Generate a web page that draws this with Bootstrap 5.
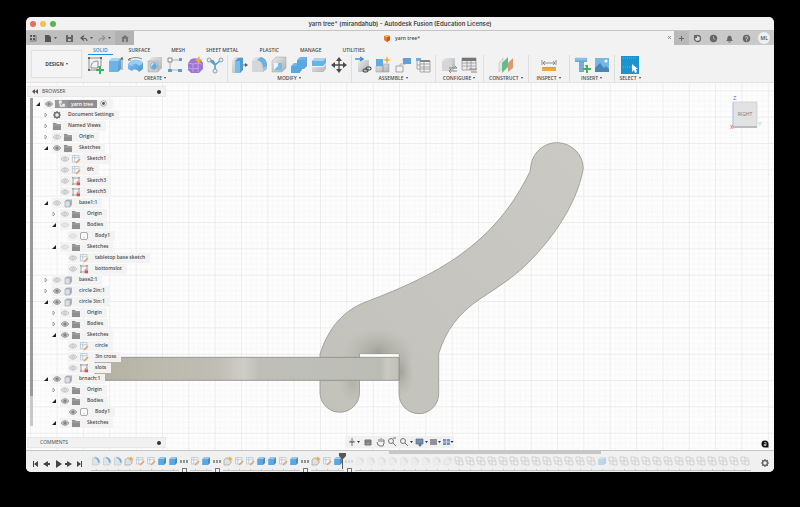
<!DOCTYPE html>
<html lang="en">
<head>
<meta charset="utf-8">
<meta name="viewport" content="width=device-width, initial-scale=1">
<title>yarn tree* - Autodesk Fusion</title>
<link href="https://cdn.jsdelivr.net/npm/bootstrap@5.3.0/dist/css/bootstrap.min.css" rel="stylesheet">
<style>
body{background:#000;font-family:"Open Sans","Noto Sans",sans-serif;font-size:5px;line-height:7px;font-weight:600;color:#4a4a4a;padding:17px 26px 35px}
.app-window{background:#f2f2f2;border-radius:5px}
.title-strip{height:14px;font:600 6px/13px Inter,sans-serif;color:#444;border-bottom:1px solid #c4c4c4}
.lights{left:4px;top:4px}
.light{width:6px;height:6px;border-radius:50%}
button{background:none;border:0;padding:0;color:inherit;font:inherit}
a{color:inherit;text-decoration:none}
svg{display:block;flex:none}
.tab-strip{height:14px;background:#c9c9c9}
.quick{width:89px;background:#bebebe}
.home-tab{width:19px;background:#b2b2b2}
.doc-tab{background:#f2f2f2;padding-right:5px}
.doc-close{right:2px;top:4px}
.plus-tab{width:15px;background:#b9b9b9}
.tab-tools{width:85px}
.avatar{width:12px;height:12px;border-radius:50%;background:#efefef;line-height:12px}
.ribbon{height:38px;border-bottom:1px solid #e2e2e2}
.design{width:51px;height:28px;margin:5px 2px 0 5px;border:1px solid #e2e2e2;border-radius:1px;background:#f4f4f4;box-shadow:0 0 1px #ccc;font-weight:700}
.mode-tabs{height:10px;gap:21px;padding-left:9px}
.mode-tabs a{line-height:10px;height:10px;border-bottom:1px solid transparent}
.mode-tabs a.active{color:#1593d6;margin:0 -5px;padding:0 5px;border-color:#1593d6}
.tools{height:28px}
.tools svg{opacity:.88}
.tool-group{border-right:1px solid #dedede;padding:0 2px 0 1px;height:27px}
.tool-group:last-child{border:0}
.tool-group .cap{line-height:6px}
.g-wide{padding:0 4px 0 3px}
.g-one{padding:0 5px}
.g-mid{padding:0 8px}
.g-tight{padding:0 2px}
.g-last{padding:0 5px}
.caret::after{content:"";display:inline-block;border:1px solid transparent;border-top:2px solid #444;border-bottom:0;margin-left:2px;vertical-align:1px}
.viewport{background:#fdfdfd;min-height:0}
.panel-bar{width:139px;height:11px;background:#f1f1f1;border:1px solid #e8e8e8;font-weight:400;padding:0 4px}
.dot{width:4px;height:4px;border-radius:50%;background:#333}
.side{padding:3px 0 2px 1px}
.tree-scroll{width:3px;margin:1px 2px 0 3px;background:#c8c8c8;height:328px}
.tree-thumb{height:91%;background:#999}
.tree{padding-top:1px}
.tree li{height:11px;line-height:11px}
.arrow{width:9px}
.cell{height:10px;background:rgba(243,243,243,.97);padding-right:5px}
.cell svg{margin-right:1px;opacity:.9}
.cell .lbl{padding-left:5px}
.l0{padding-left:0}.l1{padding-left:8px}.l2{padding-left:16px}.l3{padding-left:24px}
.root .lbl{background:#8f8f8f;color:#fff;height:8px;line-height:8px;padding:0 4px 0 3px;margin-right:3px}
.root .mid{background:#8f8f8f;height:8px;width:13px;margin:0}
.nav-tools{left:50%;bottom:2px;margin-left:-55px;width:109px;height:12px;background:#f1f1f1;padding:0 2px}
.badge-a{right:5px;bottom:2px}
.timeline{height:22px;background:#f0f0f0;border-top:1px solid #c6c6c6}
.h-scroll{margin-left:48.5%;width:28.4%;height:3px;background:#c6c6c6}
.player{width:65px;padding:3px 0 0 2px}
.feat{width:11px;height:17px;padding-top:2px}
.feat>svg{opacity:.88}
.feat::after{content:"";position:absolute;left:0;right:0;bottom:0;height:2px;border-bottom:1px solid #c5c5c5;background:linear-gradient(#c5c5c5,#c5c5c5) 5px 0/1px 2px no-repeat}
.feat.group::after{left:3px;right:auto;width:5px;height:5px;bottom:-2px;border:1px solid #777;background:#f0f0f0}
.dim>svg{opacity:.22;filter:grayscale(.8)}
.dim.tinted>svg{opacity:.3;filter:none}
.head{right:-2px;top:-2px;z-index:2}
</style>
<script src="https://cdn.jsdelivr.net/npm/bootstrap@5.3.0/dist/js/bootstrap.bundle.min.js"></script>
</head>
<body class="vh-100 overflow-hidden">
<svg width="0" height="0" class="position-absolute" aria-hidden="true">
<defs>
<linearGradient id="blue" x2="1" y2="1"><stop stop-color="#7dc1ee"/><stop offset="1" stop-color="#3389cc"/></linearGradient>
<linearGradient id="gry" x2="1" y2="1"><stop stop-color="#e6e8ea"/><stop offset="1" stop-color="#a5a9ad"/></linearGradient>
<symbol id="t-sketch" viewBox="0 0 20 20"><path d="M4 3v12h9M4 3h12v8M6 13C6 9 7 6 13 6v7z" fill="none" stroke="#666" stroke-width=".8"/><path d="M3 2h2v2H3zM15 2h2v2h-2zM3 14h2v2H3z" fill="#555"/><path d="M13 11h3v3h3v2h-3v3h-2v-3h-3v-2h3z" fill="#2fa84c"/></symbol>
<symbol id="t-extrude" viewBox="0 0 20 20"><path d="M4 6l3-3h9v11l-3 3H4z" fill="url(#blue)"/><path d="M4 6h9v11H4z" fill="#5aacE4"/><path d="M4 6l3-3h9l-3 3z" fill="#9bd0f3"/><path d="M17 15V3m-1 2l1-3 1 3" fill="none" stroke="#444" stroke-width=".7"/></symbol>
<symbol id="t-revolve" viewBox="0 0 20 20"><path d="M3 9c3-5 11-6 15-1v6l-4 3c-2-3-5-3-7-1l-4-2z" fill="url(#blue)"/><path d="M3 9c3-5 11-6 15-1l-4 3c-2-3-5-3-7 0z" fill="#8fc9f0"/><path d="M3 5c4-3 10-3 14-1M3 5l2-2M3 5h3" fill="none" stroke="#555" stroke-width=".8"/></symbol>
<symbol id="t-hole" viewBox="0 0 20 20"><path d="M3 6l4-4h10v11l-4 4H3z" fill="url(#gry)"/><path d="M3 6h10v11H3z" fill="#c8cacc" stroke="#999" stroke-width=".5"/><circle cx="9" cy="11" r="3.5" fill="#e7f5ff" stroke="#689" stroke-width=".7"/><path d="M9 8a3 3 0 1 1-3 4z" fill="#4fa4dd"/></symbol>
<symbol id="t-pattern" viewBox="0 0 20 20"><path d="M5 5h11M5 5v10h10" fill="none" stroke="#999" stroke-width=".8"/><path d="M3 3h4v4H3z" fill="#f5f5f5" stroke="#666" stroke-width=".8"/><path d="M14 3h3v3h-3zM3 14h4v3H3zM13 14h4v3h-4z" fill="#3d97d5"/></symbol>
<symbol id="t-form" viewBox="0 0 20 20"><path d="M3 8l3-4q5-2 10 1l2 3v6l-4 4H6l-3-3z" fill="#9367cf"/><path d="M3 8l5 1 5-1 4 1M8 9v8M3 13l5 1 6-1M13 8v9" fill="none" stroke="#bfa3e8" stroke-width=".8"/><path d="M14 1l1 3 3 1-3 1-1 3-2-3-2-1 2-1z" fill="#f5a51d"/></symbol>
<symbol id="t-branch" viewBox="0 0 20 20"><path d="M4 5l6 5 6-5M10 10v6M4 5l4 1 2 3" fill="none" stroke="#3e94cf" stroke-width="1.6"/><g fill="#dfeefa" stroke="#68808f" stroke-width=".8"><circle cx="4" cy="5" r="2"/><circle cx="16" cy="5" r="2"/><circle cx="10" cy="16" r="2"/></g></symbol>
<symbol id="t-press" viewBox="0 0 20 20"><path d="M3 6l3-4h8v12l-3 4H3z" fill="url(#gry)"/><path d="M6 6l3-3h5v12l-3 3H6z" fill="#3b90d0"/><path d="M6 6h5v12H6z" fill="#6ab5e8"/><path d="M14 10h3" stroke="#444" stroke-width=".9"/><path d="M16 8l3 2-3 2z" fill="#444"/></symbol>
<symbol id="t-fillet" viewBox="0 0 20 20"><path d="M3 5l3-3h6c4 1 6 4 6 9v3l-4 3H3z" fill="url(#gry)"/><path d="M3 6h4c5 0 7 4 7 11H3z" fill="#d1d3d5"/><path d="M8 5l4-3c4 1 6 4 6 9l-4 2c0-5-2-7-6-8z" fill="#54a9e2"/></symbol>
<symbol id="t-shell" viewBox="0 0 20 20"><path d="M3 6l4-4h10v11l-4 4H3z" fill="url(#gry)" stroke="#999" stroke-width=".5"/><path d="M5 8h8v7H5z" fill="#eef5fa"/><path d="M5 15l4-4h4v4zM9 8h4v3H9z" fill="#6ab5e8"/></symbol>
<symbol id="t-combine" viewBox="0 0 20 20"><path d="M8 5l3-3h7v9l-3 3h-2v1l-3 3H2v-7l3-3h3z" fill="url(#blue)"/><path d="M8 5h7v9h-4v4H2v-7h6z" fill="#459fdf"/></symbol>
<symbol id="t-split" viewBox="0 0 20 20"><path d="M3 6l3-3h11v5l-3 3H3z" fill="#55aae4"/><path d="M3 6l3-3h11l-3 3z" fill="#9ed1f3"/><path d="M3 12h11l3-3v5l-3 3H3z" fill="url(#gry)"/></symbol>
<symbol id="t-move" viewBox="0 0 20 20"><path d="M10 4v12M4 10h12" stroke="#333" stroke-width="1.3"/><path d="M10 2l3 4H7zM10 18l3-4H7zM2 10l4-3v6zM18 10l-4-3v6z" fill="#333"/></symbol>
<symbol id="t-insertc" viewBox="0 0 20 20"><path d="M5 7l3-2h8v9l-3 3H5z" fill="url(#gry)"/><path d="M2 4h7m-2-2l3 2-3 2" fill="none" stroke="#2289cc" stroke-width="1.5"/><g fill="none" stroke="#333" stroke-width="1.1"><rect x="10" y="14" width="5" height="3" rx="1.5"/><rect x="13" y="12" width="5" height="3" rx="1.5"/></g></symbol>
<symbol id="t-newc" viewBox="0 0 20 20"><path d="M3 4h7v7H3z" fill="#4da4df"/><path d="M3 11h7v6H3zM10 9h6v8h-6z" fill="url(#gry)" stroke="#888" stroke-width=".5"/><path d="M14 1l1 3 3 1-3 1-1 3-1-3-3-1 3-1z" fill="#f5a51d"/></symbol>
<symbol id="t-joint" viewBox="0 0 20 20"><path d="M9 5h2v5M7 11V9h6" fill="none" stroke="#999" stroke-width=".7"/><path d="M10 3h8v6h-8z" fill="#4c95d0"/><path d="M3 11h7v6H3z" fill="#f3f3f3" stroke="#999"/></symbol>
<symbol id="t-table" viewBox="0 0 20 20"><path d="M3 3h5v3H3z" fill="#5ba6dc"/><path d="M4 6v8h3M4 10h3M7 6h10v11H7zM7 9h10M7 12h10M7 14h10M11 6v11" fill="none" stroke="#888" stroke-width=".8"/><path d="M7 5h10v2H7z" fill="#777"/></symbol>
<symbol id="t-conf" viewBox="0 0 20 20"><path d="M3 6l3-3h10v10l-3 3H3z" fill="url(#gry)"/><path d="M3 6h10v10H3z" fill="#cfd2d4"/><path d="M10 13h8m-2-2l2 2M10 16h8m-6-2l-2 2 2 2" fill="none" stroke="#777"/></symbol>
<symbol id="t-conft" viewBox="0 0 20 20"><path d="M3 3h14v12H3zM3 8h14M3 11h14M8 6v9M12 6v9" fill="#eee" stroke="#888" stroke-width=".8"/><path d="M3 3h14v3H3z" fill="#666"/><path d="M10 14h8m-6 3h6" stroke="#777"/></symbol>
<symbol id="t-plane" viewBox="0 0 20 20"><path d="M3 8l4-5v9l-4 5z" fill="#e6e6e6" stroke="#aaa" stroke-width=".5"/><path d="M6 8l6-6v10l-6 6z" fill="#4eb878"/><path d="M12 8l5-5v10l-5 4z" fill="#d98b62"/></symbol>
<symbol id="t-measure" viewBox="0 0 20 20"><path d="M3 5v5M17 5v5M4 8h12M6 6L4 8l2 2M14 6l2 2-2 2" fill="none" stroke="#666" stroke-width=".8"/><path d="M3 12h14v4H3z" fill="#e8a02e"/><path d="M5 12v1m2-1v1m2-1v1m2-1v1m2-1v1m2-1v1" stroke="#a66e15" stroke-width=".6"/></symbol>
<symbol id="t-bolt" viewBox="0 0 20 20"><path d="M3 3h12v4h-3v10H7V7H3z" fill="#5c9dd0"/><path d="M3 3h12v2H3zM7 9h5M7 12h5M7 15h5" stroke="#8cc2e9" stroke-width=".6" fill="#79b2dd"/><path d="M13 10h3v3h3v2h-3v3h-2v-3h-3v-2h3z" fill="#2fa84c"/></symbol>
<symbol id="t-image" viewBox="0 0 20 20"><path d="M3 3h14v14H3z" fill="#65afe4"/><path d="M3 13l5-5 4 5 2-2 3 3v3H3z" fill="#3277b0"/><circle cx="14" cy="6" r="1.5" fill="#fff"/></symbol>
<symbol id="t-select" viewBox="0 0 20 20"><path d="M1 1h18v18H1z" fill="#0088cc"/><path d="M3 3h14M3 12h9" stroke="#76bee3" stroke-width=".6" stroke-dasharray="1 1"/><path d="M12 9v8l2-2 1 3 2-1-1-3h2z" fill="#fff"/></symbol>
<symbol id="eye-on" viewBox="0 0 10 10"><path d="M1 5q4-5 8 0q-4 5-8 0z" fill="#bbb" stroke="#888" stroke-width=".7"/><circle cx="5" cy="5" r="1.6" fill="#777"/></symbol>
<symbol id="eye-off" viewBox="0 0 10 10"><path d="M1 5q4-4.500 8 0q-4 4.500-8 0z" fill="#eee" stroke="#aaa" stroke-width=".7"/><circle cx="5" cy="5" r="1.300" fill="none" stroke="#aaa" stroke-width=".7"/></symbol>
<symbol id="eye-dim" viewBox="0 0 10 10"><path d="M1 5q4-4.500 8 0q-4 4.500-8 0z" fill="#e4e4e4" stroke="#d2d2d2" stroke-width=".7"/></symbol>
<symbol id="folder" viewBox="0 0 10 10"><path d="M1 2h3l1 1h4v6H1z" fill="#858585"/><path d="M1 4h8" stroke="#b5b5b5" stroke-width=".6"/></symbol>
<symbol id="gear" viewBox="0 0 10 10"><circle cx="5" cy="5" r="2.500" fill="none" stroke="#666" stroke-width="1.500"/><path d="M5 1v1.200M5 7.800V9M1 5h1.200M7.800 5H9M2.200 2.200l.8.800M7 7l.8.800M7.800 2.200L7 3M3 7l-.8.800" stroke="#666" stroke-width="1.200"/></symbol>
<symbol id="sk" viewBox="0 0 10 10"><path d="M1.500 1.500h6.500v6.500h-6.500zM1.500 3.700h6.500M3.700 1.500v6.500" fill="#f4f6f8" stroke="#9fb6c8" stroke-width=".6"/><path d="M4.500 8.500l4-4 1 1-4 4z" fill="#e69554"/></symbol>
<symbol id="sklock" viewBox="0 0 10 10"><path d="M2 8V2h6v3M2 8h3" fill="none" stroke="#777" stroke-width=".7"/><path d="M1 1h1.500v1.500H1zM7.500 1H9v1.500H7.500zM1 7.500h1.500V9H1z" fill="#999"/><path d="M5.500 6.300H9v3H5.500z" fill="#d33f49"/><path d="M6.300 6V5.500q1-1 2 0V6" fill="none" stroke="#d33f49" stroke-width=".7"/></symbol>
<symbol id="comp" viewBox="0 0 10 10"><path d="M2 3l2-1.500h5v5.500l-2 2H2z" fill="#a7aeb8"/><path d="M2 3h5v6H2z" fill="#d9dde2" stroke="#8f969e" stroke-width=".6"/></symbol>
<symbol id="bod" viewBox="0 0 10 10"><rect x="1.500" y="1.500" width="7" height="7" rx="1.500" fill="#fafafa" stroke="#8b8b98" stroke-width=".8"/><path d="M4 6.500h2" stroke="#bbb" stroke-width=".6"/></symbol>
<symbol id="asm" viewBox="0 0 10 10"><path d="M2 1h3v3H2zM3 4v4h3M6 5h3v3H6z" fill="#e9edf2" stroke="#e9edf2" stroke-width=".7"/></symbol>
<symbol id="open" viewBox="0 0 9 10"><path d="M5 3v4H1z" fill="#222"/></symbol>
<symbol id="shut" viewBox="0 0 9 10"><path d="M2 3v4l2-2z" fill="#fff" stroke="#777" stroke-width=".6"/></symbol>
<symbol id="ext" viewBox="0 0 10 10"><path d="M1.500 3L3 1.500h6V7L7 9H1.500z" fill="#2f7fc0"/><path d="M1.500 3H7v6H1.500z" fill="#459fe0"/><path d="M1.500 3L3 1.500h6L7 3z" fill="#8cc8f0"/></symbol>
<symbol id="fil" viewBox="0 0 10 10"><path d="M1.500 2L3 1q6 0 6 6L7 9H1.500z" fill="#dfe3e6" stroke="#a4a9b2" stroke-width=".4"/><path d="M3.500 2q3.500 1 3.500 5l1.700-.8Q8.500 1.500 4 1.200z" fill="#5ea8df"/></symbol>
<symbol id="box" viewBox="0 0 10 10"><path d="M1 4l2-2h5v5L6 9H1z" fill="#dcdfe2" stroke="#888" stroke-width=".6"/><path d="M7 0l.6 2L10 3l-2 .8L7 6l-.8-2-2-1 2-1z" fill="#f0a62a"/></symbol>
<symbol id="dots" viewBox="0 0 10 10"><path d="M1 4h2v3H1zM4 4h2v3H4zM7 4h2v3H7z" fill="#888"/></symbol>
<symbol id="jnt" viewBox="0 0 10 10"><path d="M1 1h4v4H1zM2 5v3h3M5 5h4v4H5zM5 2h3v3" fill="none" stroke="#444" stroke-width=".8"/></symbol>
</defs>
</svg>

<main class="app-window h-100 d-flex flex-column overflow-hidden">
 <header class="title-strip position-relative text-center">
  <div class="lights position-absolute d-flex gap-1"><span class="light" style="background:#ed6a5e"></span><span class="light" style="background:#f4bf4f"></span><span class="light" style="background:#55b947"></span></div>
  yarn tree* (mirandahub) - Autodesk Fusion (Education License)
 </header>
 <div class="tab-strip d-flex flex-shrink-0">
  <div class="quick d-flex align-items-center">
   <svg width="89" height="14" viewBox="0 0 89 14"><path d="M4 4h2v2H4zM7 4h2v2H7zM4 7h2v2H4zM7 7h2v2H7zM19 4h4l2 2v5h-6z" fill="#555"/><path d="M4 10h6M10 4v6" stroke="#666" stroke-width=".8"/><path d="M28 6h3l-1.500 2zM64 6h3l-1.500 2zM82 6h3l-1.500 2z" fill="#555"/><path d="M40 4h7v7h-7z" fill="#666"/><path d="M42 4h3v2h-3zM42 8h3v2h-3z" fill="#bbb"/><path d="M61 10q0-3-5-3m2-2.500L55 7l3 2.500" fill="none" stroke="#555" stroke-width="1.200"/><path d="M73 10q0-3 5-3m-2-2.500L79 7l-3 2.500" fill="none" stroke="#919191" stroke-width="1.200"/></svg>
  </div>
  <button class="home-tab d-flex align-items-center justify-content-center" aria-label="Home"><svg width="8" height="8" viewBox="0 0 8 8"><path d="M0 4l4-3 4 3H7v4H1V4z" fill="#777"/><path d="M3 5h2v3H3z" fill="#aaa"/></svg></button>
  <div class="doc-tab flex-grow-1 d-flex align-items-center justify-content-center position-relative">
   <svg width="8" height="8" viewBox="0 0 8 8"><path d="M1 2l3-1 3 1v4L4 8 1 6z" fill="#e8792b"/><path d="M1 2l3-1 3 1-3 1.500z" fill="#ffb06c"/><path d="M4 3.500L7 2v4L4 8z" fill="#c95a16"/></svg>
   <span class="ps-1">yarn tree*</span>
   <button class="doc-close position-absolute" aria-label="Close tab"><svg width="5" height="5" viewBox="0 0 5 5"><path d="M1 1l3 3M4 1L1 4" stroke="#777" stroke-width=".8"/></svg></button>
  </div>
  <button class="plus-tab d-flex align-items-center justify-content-center ms-0" aria-label="New tab"><svg width="7" height="7" viewBox="0 0 7 7"><path d="M3.500 1v5M1 3.500h5" stroke="#666"/></svg></button>
  <div class="tab-tools d-flex align-items-center justify-content-around">
   <svg width="9" height="9" viewBox="0 0 9 9"><circle cx="4.500" cy="4.500" r="3" fill="#ddd" stroke="#666" stroke-width="1.300"/><path d="M1 1h3v3H1z" fill="#666"/></svg>
   <svg width="9" height="9" viewBox="0 0 9 9"><circle cx="4.500" cy="4.500" r="3.700" fill="#666"/><path d="M4.500 2v3h2" fill="none" stroke="#bbb" stroke-width=".7"/></svg>
   <svg width="9" height="9" viewBox="0 0 9 9"><path d="M1 7q1.500-1 1.500-4 2-3 4 0 0 3 1.500 4zM3.500 7.500h2v1h-2z" fill="#666"/></svg>
   <svg width="9" height="9" viewBox="0 0 9 9"><circle cx="4.500" cy="4.500" r="3.700" fill="#666"/><path d="M3 3.500q1.500-2 3 0 0 1-1.500 1.500v.8M4.500 6.500v.8" fill="none" stroke="#ddd" stroke-width=".8"/></svg>
   <span class="avatar text-center">ML</span>
  </div>
 </div>
 <div class="ribbon d-flex flex-shrink-0">
  <button class="design caret flex-shrink-0">DESIGN</button>
  <div>
   <nav class="mode-tabs d-flex"><a href="#" class="active">SOLID</a><a href="#">SURFACE</a><a href="#">MESH</a><a href="#">SHEET METAL</a><a href="#">PLASTIC</a><a href="#">MANAGE</a><a href="#">UTILITIES</a></nav>
   <div class="tools d-flex" id="tools"></div>
  </div>
 </div>
 <section class="viewport flex-grow-1 position-relative overflow-hidden">
  <svg class="position-absolute top-0 start-0 w-100 h-100" viewBox="26 83 748 367" preserveAspectRatio="xMidYMid slice">
   <defs>
    <pattern id="grid" x="320" y="143" width="26.340" height="26.340" patternUnits="userSpaceOnUse"><path d="M5.270 0v26.340M10.540 0v26.340M15.800 0v26.340M21.070 0v26.340M0 5.270h26.340M0 10.540h26.340M0 15.800h26.340M0 21.070h26.340" stroke="#f6f6f6" stroke-width=".7"/><path d="M0 0v26.340M0 0h26.340" stroke="#dedede" stroke-width="1"/></pattern>
    <linearGradient id="arm" x1="0" x2="1" y1="1" y2="0"><stop stop-color="#c2c2bb"/><stop offset="1" stop-color="#cac9c4"/></linearGradient>
    <linearGradient id="plate" x1="95" x2="399" gradientUnits="userSpaceOnUse"><stop stop-color="#b3b0a3"/><stop offset=".2" stop-color="#bcb9ad"/><stop offset=".4" stop-color="#bfbdb4"/><stop offset=".49" stop-color="#cecdc7"/><stop offset=".54" stop-color="#bfbfb8"/><stop offset=".8" stop-color="#bcbeb7"/><stop offset=".94" stop-color="#bbbdb5"/><stop offset=".96" stop-color="#c9c9c2"/><stop offset="1" stop-color="#bfc0b8"/></linearGradient>
    <radialGradient id="shade"><stop stop-color="#8a8a83" stop-opacity=".6"/><stop offset="1" stop-color="#a9a9a2" stop-opacity="0"/></radialGradient>
    <clipPath id="armclip"><path d="M320 354C328 329 343 310 367 301.500C402 288 432 275 460 255C492 232 513 206 530 171.500C530.500 169 530.700 167 531 165A26.300 26.300 0 0 1 583.300 168.500C579 193 565 220 546 243C521 274 502 284 480 299C459 313 446 330 438.700 353.500V393.800A19.800 19.800 0 0 1 399 393.800V354H359.500V393.800A19.800 19.800 0 0 1 320 393.800z"/></clipPath>
   </defs>
   <path fill="url(#grid)" d="M26 83h748v367H26z"/>
   <path fill="url(#arm)" stroke="#96968f" stroke-width=".8" d="M320 354C328 329 343 310 367 301.500C402 288 432 275 460 255C492 232 513 206 530 171.500C530.500 169 530.700 167 531 165A26.300 26.300 0 0 1 583.300 168.500C579 193 565 220 546 243C521 274 502 284 480 299C459 313 446 330 438.700 353.500V393.800A19.800 19.800 0 0 1 399 393.800V354H359.500V393.800A19.800 19.800 0 0 1 320 393.800z"/>
   <g clip-path="url(#armclip)" fill="url(#shade)"><ellipse cx="378" cy="352" rx="36" ry="24"/><ellipse cx="401" cy="372" rx="13" ry="25"/><ellipse cx="353" cy="384" rx="15" ry="20" opacity=".5"/></g>
   <path d="M360 354.300h38.600v3H360z" fill="#fff"/>
   <path d="M95 357.300h304v23H95z" fill="url(#plate)" stroke="#8c8c84" stroke-width=".8"/>
   <path d="M733 102h24v25h-24z" fill="#e1e2e2" stroke="#c9c9c9" stroke-width=".6"/><path d="M733 126h24v2h-24z" fill="#bbb"/>
   <path d="M733 102v24" stroke="#b3b3f0" stroke-width=".7"/>
   <g font-family="Open Sans, sans-serif" font-weight="400"><text x="745" y="116" font-size="5" text-anchor="middle" fill="#777">RIGHT</text><text x="733" y="100" font-size="6" fill="#6b62df">Z</text><text x="730" y="129" font-size="6" fill="#e04848">X</text><text x="758" y="126" font-size="6" fill="#8bdc9b">Y</text></g>
  </svg>
  <aside class="side position-relative h-100 d-flex flex-column align-items-start">
   <div class="panel-bar d-flex align-items-center justify-content-between"><span><svg class="d-inline-block me-1" width="6" height="5" viewBox="0 0 6 5"><path d="M3 0v5L0 2.500zM6 0v5L3 2.500z" fill="#555"/></svg>BROWSER</span><span class="dot"></span></div>
   <div class="d-flex flex-grow-1"><div class="tree-scroll"><div class="tree-thumb"></div></div><ul class="tree list-unstyled m-0 text-nowrap" id="tree"></ul></div>
   <div class="panel-bar d-flex align-items-center justify-content-between"><span class="ps-2">COMMENTS</span><span class="dot"></span></div>
  </aside>
  <div class="nav-tools position-absolute">
   <svg width="107" height="12" viewBox="0 0 105 12"><g fill="none" stroke="#666" stroke-width=".9"><path d="M4 2v8M1 6h6M2 5q2 3 4 0"/><path d="M17 4h6v5h-6zM17 6h6" fill="#999"/><path d="M29 6l1 3 2 1h3l1-3V4M31 6V3M33 6V2M35 6V3"/><circle cx="43" cy="5" r="2.500"/><path d="M45 7l3 3M45 2h3"/><circle cx="55" cy="5" r="2.500"/><path d="M57 7l3 3"/></g><path d="M68 3h7v5h-7zM71 8v2h2V8z" fill="#6f8fb5" stroke="#667" stroke-width=".7"/><path d="M82 3h7v6h-7z" fill="#909498"/><path d="M95 3h7v6h-7z" fill="#7192bb"/><path d="M95 6h7M98.500 3v6" stroke="#dbe5f0" stroke-width=".8"/><path d="M9 5h3l-1.500 2zM62 5h3l-1.500 2zM77 5h3l-1.500 2zM90 5h3l-1.500 2zM102.500 5h3L104 7z" fill="#333"/></svg>
  </div>
  <svg class="badge-a position-absolute" width="8" height="8" viewBox="0 0 8 8"><path d="M4 .5A3.500 3.500 0 1 0 4 7.500H7.500V4A3.500 3.500 0 0 0 4 .5z" fill="#111"/><path d="M3 2.500h2v3H3v-1h2" fill="none" stroke="#ddd" stroke-width=".7"/></svg>
 </section>
 <footer class="timeline flex-shrink-0">
  <div class="h-scroll"></div>
  <div class="d-flex">
   <div class="player flex-shrink-0"><svg width="60" height="14" viewBox="0 0 60 14"><g fill="#444"><path d="M5 4h1v6H5zM10 4v6L6 7zM20 4v6l-5-3zM20 6h2v2h-2zM28 3v8l6-4zM39 4v6l5-3zM37 6h2v2h-2zM49 4v6l4-3zM53 4h1v6h-1z"/></g></svg></div>
   <div class="d-flex flex-grow-1" id="features"></div>
   <svg class="mt-1 me-1" width="10" height="10"><use href="#gear"/></svg>
  </div>
 </footer>
</main>
<script>
const icon=(id,w,h=w,c='')=>`<svg class="${c}" width="${w}" height="${h}" aria-hidden="true"><use href="#${id}"/></svg>`;
document.getElementById('tools').innerHTML=[
 ['CREATE','','sketch extrude revolve hole pattern form branch'],
 ['MODIFY','','press fillet shell combine split move'],
 ['ASSEMBLE','','insertc newc joint table'],
 ['CONFIGURE','g-wide','conf conft'],
 ['CONSTRUCT','g-one','plane'],
 ['INSPECT','g-mid','measure'],
 ['INSERT','g-tight','bolt image'],
 ['SELECT','g-last','select']
].map(([n,c,i])=>`<div class="tool-group ${c} d-flex flex-column align-items-center"><div class="d-flex">${i.split(' ').map(k=>`<button aria-label="${k}">${icon('t-'+k,20)}</button>`).join('')}</div><button class="cap caret text-nowrap">${n}</button></div>`).join('');

/* level, arrow, eye, icon, label */
document.getElementById('tree').innerHTML=[
 [0,'open','on','asm','yarn tree'],[1,'shut','','gear','Document Settings'],[1,'shut','','folder','Named Views'],
 [1,'shut','off','folder','Origin'],[1,'open','on','folder','Sketches'],
 [2,'','off','sk','Sketch1'],[2,'','off','sk','6ft'],[2,'','off','sklock','Sketch3'],[2,'','off','sklock','Sketch5'],
 [1,'open','off','comp','base1:1'],[2,'shut','off','folder','Origin'],[2,'open','dim','folder','Bodies'],[3,'','dim','bod','Body1'],
 [2,'open','dim','folder','Sketches'],[3,'','off','sk','tabletop base sketch'],[3,'','off','sklock','bottomslot'],
 [1,'shut','off','comp','base2:1'],[1,'shut','on','comp','circle 2in:1'],[1,'open','on','comp','circle 3in:1'],
 [2,'shut','off','folder','Origin'],[2,'shut','on','folder','Bodies'],[2,'open','on','folder','Sketches'],
 [3,'','off','sk','circle'],[3,'','off','sk','3in cross'],[3,'','off','sklock','slots'],
 [1,'open','on','comp','brnach:1'],[2,'shut','off','folder','Origin'],[2,'open','on','folder','Bodies'],[3,'','on','bod','Body1'],
 [2,'open','on','folder','Sketches']
].map(([l,a,e,i,t])=>`<li class="d-flex align-items-center l${l} ${l?'':'root'}"><span class="arrow">${a?icon(a,9,10):''}</span><span class="cell d-flex align-items-center">${e?icon('eye-'+e,10):''}${icon(i,10,10,l?'':'mid')}<span class="lbl">${t}</span>${l?'':'<svg width="7" height="7" viewBox="0 0 7 7"><circle cx="3.500" cy="3.500" r="2.800" fill="#fff" stroke="#888" stroke-width=".8"/><circle cx="3.500" cy="3.500" r="1.400" fill="#444"/></svg>'}</span></li>`).join('');

const done='fil fil fil box sk sk ext ext dots sk ext dots box sk sk ext ext sk ext dots box sk ext'.split(' ');
const later=['dots',...Array(8).fill('fil'),'box',...Array(27).fill('jnt')];
later[23]='ext';
document.getElementById('features').innerHTML=[...done,...later].map((k,n)=>`<div class="feat position-relative ${k==='dots'?'group':''} ${n>=done.length?'dim':''} ${n===done.length+23?'tinted':''}">${icon(k,10)}${n===done.length-1?'<svg class="head position-absolute" width="7" height="18" viewBox="0 0 7 18"><path d="M0 1h7v3L4 7v10H3V7L0 4z" fill="#444"/></svg>':''}</div>`).join('');
</script>
</body>
</html>
